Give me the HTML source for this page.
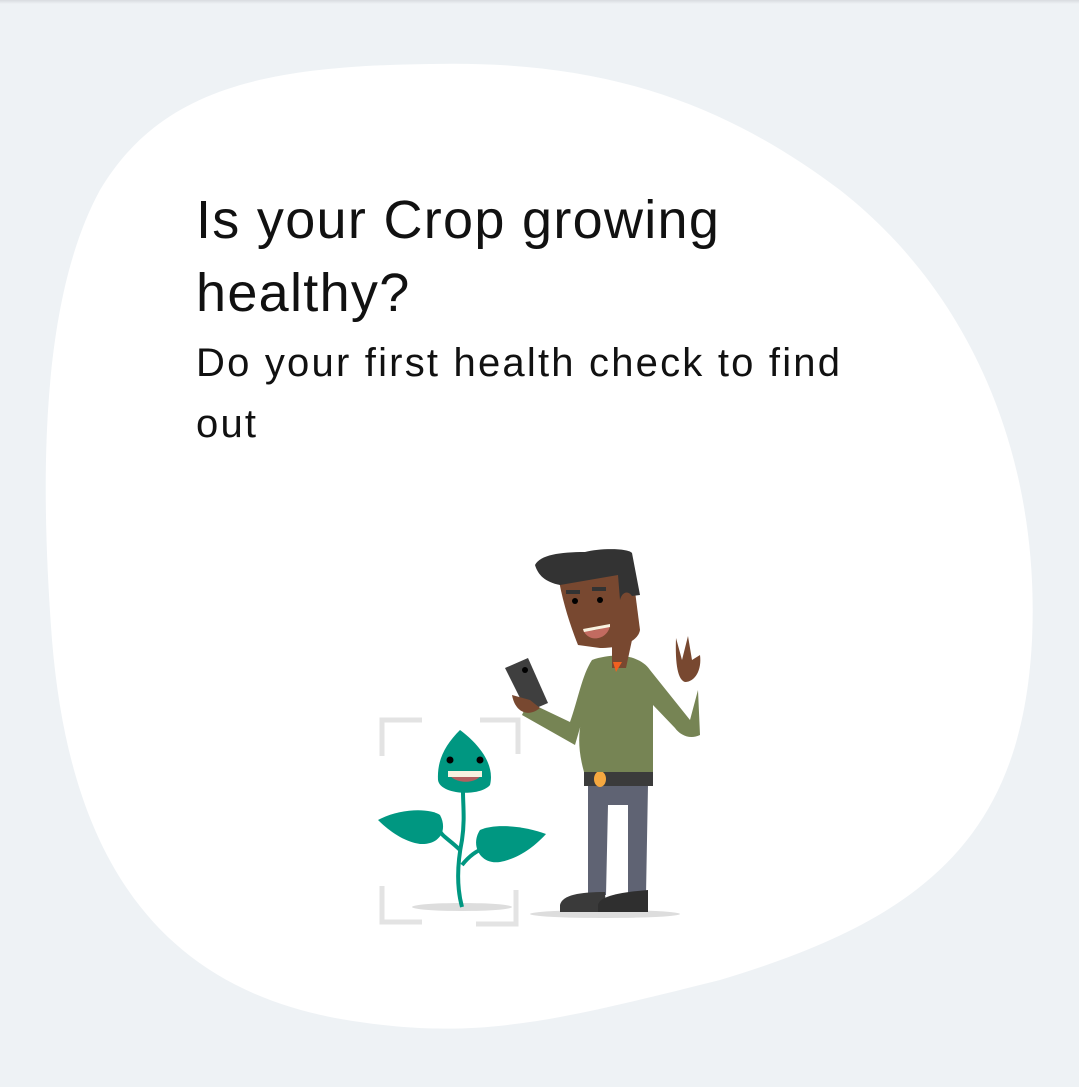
<!DOCTYPE html>
<html><head><meta charset="utf-8"><style>
html,body{margin:0;padding:0;width:1079px;height:1087px;overflow:hidden;background:#eef2f5;font-family:"Liberation Sans",sans-serif;}
.bar{position:absolute;left:0;top:0;width:1079px;height:4px;background:linear-gradient(#d8dbdf,#eef2f5);}
svg.blob{position:absolute;left:0;top:0}
.t{position:absolute;left:196px;color:#111;margin:0}
h1{font-weight:normal;font-size:54px;letter-spacing:1.3px;line-height:73px;top:184px;}
p.s{font-size:40px;letter-spacing:2.2px;line-height:61px;top:333px;width:680px}
</style></head><body>
<div class="bar"></div>
<svg class="blob" width="1079" height="1087">
<path d="M430 64 C600 60 720 100 840 190 C980 300 1040 470 1032 640 C1022 840 920 920 720 980 C560 1020 480 1040 360 1022 C160 995 70 860 52 640 C40 480 40 300 100 190 C160 90 260 66 430 64 Z" fill="#fff"/>
<g stroke="#e3e3e3" stroke-width="5" fill="none">
<path d="M382 756 V720 H422"/><path d="M480 720 H518 V754"/>
<path d="M382 886 V922 H422"/><path d="M476 924 H516 V890"/>
</g>
<ellipse cx="462" cy="907" rx="50" ry="4" fill="#ddd"/>
<ellipse cx="605" cy="914" rx="75" ry="4" fill="#ddd"/>
<g fill="#009781">
<path d="M462 907 C456 885 458 860 462 840 C465 820 463 805 463 792" stroke="#009781" stroke-width="4" fill="none"/>
<path d="M460 850 C450 840 440 835 440 830" stroke="#009781" stroke-width="4" fill="none"/>
<path d="M462 865 C470 855 478 850 485 848" stroke="#009781" stroke-width="4" fill="none"/>
<path d="M378 820 C400 808 430 808 440 815 C448 830 440 845 420 844 C405 842 390 832 378 820Z"/>
<path d="M546 834 C525 826 495 823 480 830 C470 845 480 865 500 862 C520 858 535 846 546 834Z"/>
<path d="M460 730 C445 745 437 760 438 780 C440 795 480 797 490 785 C495 765 480 745 460 730Z"/>
</g>
<circle cx="450" cy="760" r="3.5" fill="#000"/><circle cx="480" cy="760" r="3.5" fill="#000"/>
<path d="M448 772 H482 C480 785 452 785 448 772Z" fill="#b25e5e"/>
<rect x="448" y="771" width="34" height="6" fill="#f8f2e0"/>
<path d="M588 785 L588 895 L606 895 L608 805 L628 805 L628 895 L646 895 L648 785Z" fill="#5f6373"/>
<path d="M560 905 C562 895 580 892 605 892 L606 912 L560 912Z" fill="#3a3a3a"/>
<path d="M598 905 C600 895 625 892 648 890 L648 912 L598 912Z" fill="#2f2f2f"/>
<rect x="584" y="771" width="69" height="15" fill="#3b3b3b"/>
<ellipse cx="600" cy="779" rx="6" ry="8" fill="#f5a840"/>
<path d="M592 660 C615 652 640 655 650 670 L690 720 L698 690 L700 735 C690 740 680 735 675 728 L653 705 L653 772 L584 772 C575 740 580 720 588 700 L575 745 L522 715 L528 702 L570 722 C578 700 582 675 592 660Z" fill="#768454"/>
<path d="M612 640 L632 640 L626 668 L612 668Z" fill="#784830"/>
<path d="M613 662 L622 662 L616 672Z" fill="#f06020"/>
<path d="M558 575 L632 568 L640 630 C638 642 620 648 600 648 L578 645 C570 625 562 600 558 575Z" fill="#784830"/>
<path d="M535 565 C540 555 560 552 585 552 C600 548 628 548 632 553 L640 595 L632 596 C628 590 622 592 620 600 L618 575 L560 585 C545 582 538 575 535 565Z" fill="#333"/>
<rect x="566" y="590" width="14" height="4" fill="#333"/><rect x="592" y="587" width="14" height="4" fill="#333"/>
<circle cx="575" cy="601" r="3" fill="#000"/><circle cx="600" cy="600" r="3" fill="#000"/>
<path d="M583 630 C595 632 605 628 610 624 C610 638 590 645 583 630Z" fill="#c26b60"/>
<path d="M583 629 L610 624 L610 627 L584 632Z" fill="#f8f2e0"/>
<path d="M505 668 L528 658 L548 703 L527 712Z" fill="#3f3f3f"/>
<circle cx="525" cy="670" r="3" fill="#000"/>
<path d="M512 695 C515 712 528 718 540 708 L530 700 Z" fill="#784830"/>
<path d="M676 638 L682 660 L688 636 L692 660 L700 655 C702 670 695 682 685 682 C678 680 675 665 676 638Z" fill="#784830"/>
</svg>
<h1 class="t">Is your Crop growing<br>healthy?</h1>
<p class="t s">Do your first health check to find out</p>
</body></html>
